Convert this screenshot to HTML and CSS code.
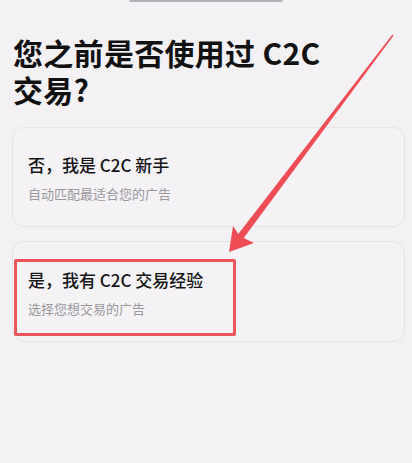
FILE: index.html
```html
<!DOCTYPE html>
<html lang="zh-CN">
<head>
<meta charset="utf-8">
<title>C2C</title>
<link rel="stylesheet" href="styles.css">
</head>
<body>
<div class="page">
  <div class="handle"></div>
  <h1 class="title"><span class="title-line">您之前是否使用过 C2C</span><span class="title-line">交易?</span></h1>
  <div class="options">
    <div class="card">
      <div class="card-title">否，我是 C2C 新手</div>
      <div class="card-sub">自动匹配最适合您的广告</div>
    </div>
    <div class="card card-marked">
      <div class="card-title">是，我有 C2C 交易经验</div>
      <div class="card-sub">选择您想交易的广告</div>
      <div class="highlight"></div>
    </div>
  </div>
  <svg class="arrow" width="412" height="463" viewBox="0 0 412 463">
    <polygon points="392.4,34.5 238.3,234 233,226 229,252 254,243 243.7,238 393.6,35.5" fill="#ee4d55"/>
  </svg>
</div>
</body>
</html>
```

FILE: styles.css
```css
html, body {
  margin: 0;
  padding: 0;
  background: #f3f1f4;
}
.page {
  position: relative;
  width: 412px;
  height: 463px;
  overflow: hidden;
  font-family: "Noto Sans CJK SC", "Noto Sans", sans-serif;
  color: #111;
}
.handle {
  width: 154px;
  height: 2px;
  margin: 0 auto;
  background: #b3b1b5;
  border-radius: 0 0 2px 2px;
}
.title {
  margin: 32px 0 0 13px;
  font-size: 30px;
  line-height: 37px;
  font-weight: 700;
  letter-spacing: 0.3px;
}
.title-line {
  display: block;
  height: 37px;
}
.options {
  display: flex;
  flex-direction: column;
  gap: 14px;
  margin: 19px 7px 0 12px;
}
.card {
  position: relative;
  border: 1px solid #e5e3e7;
  border-radius: 12px;
  background: #f4f2f5;
  padding: 25px 15px 23px 15px;
  height: 50px;
}
.card-marked {
  padding-top: 26px;
}
.card-title {
  font-size: 17px;
  line-height: 24px;
  font-weight: 500;
  color: #151515;
}
.card-sub {
  margin-top: 8px;
  font-size: 13px;
  line-height: 18px;
  color: #9a989c;
}
.highlight {
  position: absolute;
  left: 1px;
  top: 17px;
  width: 216px;
  height: 71px;
  border: 3px solid #e9555a;
  border-radius: 2px;
}
.arrow {
  position: absolute;
  left: 0;
  top: 0;
  pointer-events: none;
}
```
